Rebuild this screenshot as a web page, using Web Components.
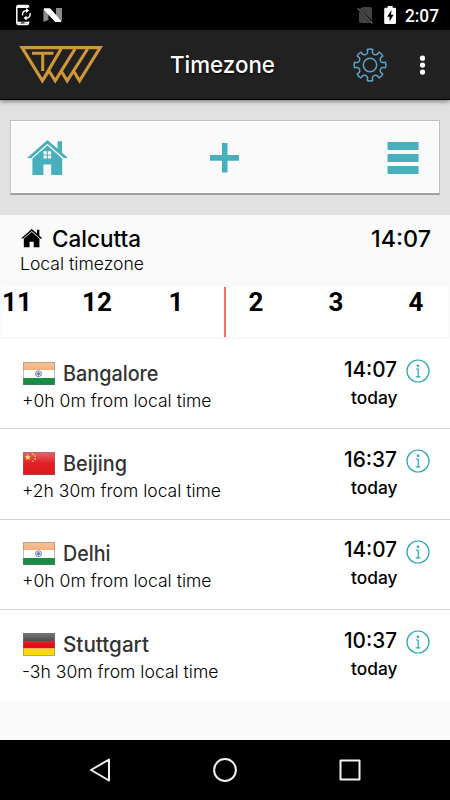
<!DOCTYPE html>
<html lang="en">
<head>
<meta charset="utf-8">
<title>Timezone</title>
<style>
html,body{margin:0;padding:0;background:#fafafa}
body{width:450px;height:800px;overflow:hidden;font-family:Inter,"Liberation Sans",sans-serif;color:#000}
</style>
</head>
<body>
<timezone-app></timezone-app>
<script>
const define=(name,html,setup)=>{
  customElements.define(name,class extends HTMLElement{
    connectedCallback(){
      if(this.shadowRoot)return;
      const r=this.attachShadow({mode:'open'});
      const t=document.createElement('template');
      t.innerHTML=typeof html==='function'?html(this):html;
      r.appendChild(t.content.cloneNode(true));
      if(setup)setup(this,r);
    }
  });
};
const attr=(e,n,d)=>e.getAttribute(n)||d;

/* One line of text set to an exact measure; height 1.4 x size, baseline 1.1 x size. */
define('fit-text',e=>{
  const s=+attr(e,'size',18),w=+attr(e,'width',100),h=+attr(e,'height',s*1.4),b=+attr(e,'base',s*1.1);
  return `<style>:host{display:block;flex:none;width:${w}px;height:${h}px}svg{display:block;overflow:visible}
  text{font-family:${attr(e,'font','Inter')},"Liberation Sans",sans-serif;font-size:${s}px;font-weight:${attr(e,'weight','400')};fill:currentColor}</style>
  <svg width="${w}" height="${h}"><text x="0" y="${b}" textLength="${w}" lengthAdjust="spacingAndGlyphs">${e.textContent}</text></svg>`;
});

define('status-bar',`<style>:host{display:flex;height:30px;background:#000;color:#fff;align-items:flex-start}
svg{display:block;flex:none}.gap{flex:1}fit-text{margin-right:11px}</style>
<svg width="80" height="30" viewBox="0 0 80 30">
 <path d="M28.600 7.500V6.600Q28.600 5.600 27.600 5.600H18.400Q16.800 5.600 16.800 7.200V22.800Q16.800 24.400 18.400 24.400H27Q28.600 24.400 28.600 22.800V21.500" fill="none" stroke="#fff" stroke-width="1.500"/>
 <path d="M17 5h11v3H17zM17 21.800h11.600v2H17z" fill="#fff"/><path d="M21 22.400h3.500v1H21z" fill="#000"/>
 <path d="M22.600 15.500A4 4 0 0 1 27 10.500M30 13A4 4 0 0 1 26 18.200" fill="none" stroke="#fff" stroke-width="1.400"/>
 <path d="M26 8l3.200 2.600L26 13zM26.600 15.600v5l-3-2.500z" fill="#fff"/>
 <path d="M43.400 9.200l5 2V20l-5 2zM56 8h6v12.500l-6-5z" fill="#8b8b8b"/>
 <path d="M44 8.200h6L61.200 20.500v1.500H55.200L44 10z" fill="#fff"/>
</svg><span class="gap"></span>
<svg width="50" height="30" viewBox="355 0 50 30">
 <path d="M363 7h7.500q1.500 0 1.500 1.500V20.500L359.500 8.800zM359 11l12 12H360.500Q359 23 359 21.500z" fill="#424242"/>
 <path d="M357.500 8l15 15.500" stroke="#5a5a5a" stroke-width="1.400"/>
 <path d="M387.600 6h5v1.700h2.200q1.200 0 1.200 1.200V22.800q0 1.200-1.200 1.200h-9.400q-1.200 0-1.200-1.200V8.900q0-1.200 1.200-1.200h2.200z" fill="#fff"/>
 <path d="M391.700 10l-4.700 6.800h2.600V21.500l4-6.800h-2.600z" fill="#000"/>
</svg>
<fit-text font="Roboto" size="18" weight="500" width="34" height="30" base="21.800">2:07</fit-text>`);

define('brand-logo',`<style>:host{display:block;width:86px;height:42px}svg{display:block}</style>
<svg width="86" height="42" viewBox="18 44 86 42" fill="none" stroke="#d0973a" stroke-width="3.100">
 <path d="M48.700 71l-6.300 9.900L22 47.600H100.200L79.600 80.900 73.300 70.500M61 49L42.400 80.900M48.700 70.500L55.200 80.900 75 49M60.800 70.500L67.200 80.900 87.500 49M73.300 70.500L79.600 80.900"/>
 <path d="M32 53.200H53.500M42.700 53.200V71" stroke-width="3"/>
</svg>`);

define('gear-icon',`<style>:host{display:block}svg{display:block}</style>
<svg width="36" height="36" viewBox="-18 -18 36 36" fill="none" stroke="#5ca3c9" stroke-width="1.500" stroke-linejoin="round"><circle r="6.700"/><path/></svg>`,(e,r)=>{
  let d='';
  for(let i=0;i<8;i++){
    const p=(rad,deg)=>{const a=(i*45+deg-90)*Math.PI/180;return (rad*Math.cos(a)).toFixed(2)+' '+(rad*Math.sin(a)).toFixed(2)};
    d+=(i?'L':'M')+p(11.800,-15)+'L'+p(13,-10.500)+'L'+p(15.700,-10)+'Q'+p(16.500,0)+' '+p(15.700,10)+'L'+p(13,10.500)+'L'+p(11.800,15)+'Q'+p(10.800,22.500)+' '+p(11.800,30);
  }
  r.querySelector('path').setAttribute('d',d+'Z');
});

define('app-header',`<style>:host{display:flex;box-sizing:border-box;height:70px;background:#212121;border-bottom:1px solid #000;color:#fff;padding:14px 20px 0 18px;box-shadow:0 1px 5px #0008;position:relative}
brand-logo{margin-right:66px}fit-text{text-shadow:0 1px 2px #000}gear-icon{margin:3px 0 0 77px}.dots{display:block;margin:9px 0 0 27px}</style>
<brand-logo></brand-logo>
<fit-text size="23.500" weight="500" width="105" height="42" base="29.300">Timezone</fit-text>
<gear-icon></gear-icon>
<svg class="dots" width="16" height="26" viewBox="414.500 53 16 26" fill="#fff"><circle cx="422.500" cy="57.600" r="2.800"/><circle cx="422.500" cy="65" r="2.800"/><circle cx="422.500" cy="72.400" r="2.800"/></svg>`);

define('house-icon',e=>{const s=+attr(e,'size',42);return `<style>:host{display:block}svg{display:block}</style>
<svg width="${s}" height="${s*36/42}" viewBox="0 0 42 36" fill="currentColor">
 <path d="M20.500 0L0 18h4.200L20.500 3.800 36.800 18H41L35 12.600V1.200H30.600V8.800z"/>
 <path d="M20.500 5.500L5.400 18.500V35H16.400V24.500H24.200V35H35.200V18.500z"/>
 ${e.hasAttribute('window')?'<path fill="#fafafa" d="M16.500 11.200h3.300v3.200h-3.300zM20.900 11.200h3.300v3.200h-3.300zM16.500 15.400h3.300v3h-3.300zM20.900 15.400h3.300v3h-3.300z"/>':''}
</svg>`});

define('tool-bar',`<style>:host{display:block;box-sizing:border-box;height:115px;background:#e1e1e1;padding:20px 10px}
.card{box-sizing:border-box;height:75px;background:#fafafa;border:1px solid #c1c1c1;border-bottom:2px solid #a0a0a0;box-shadow:inset 0 0 0 1px #fff;display:grid;grid-template-columns:1fr auto 1fr;align-items:start;padding:19px 20px 0 16px;color:#48b0bc}
svg{display:block}.plus{margin:3px 0 0 2px}.menu{margin-top:2px;justify-self:end}</style>
<div class="card"><house-icon window></house-icon>
<svg class="plus" width="29" height="30"><path d="M12 0h5.500v12H29v5.800H17.500V29.500H12V17.800H0V12h12z" fill="currentColor"/></svg>
<svg class="menu" width="32" height="32" fill="currentColor"><path d="M.5 0h31v8h-31zM.5 12h31v8h-31zM.5 24h31v8h-31z"/></svg></div>`);

define('local-zone',`<style>:host{display:flex;justify-content:space-between;box-sizing:border-box;height:72px;background:#fafafa;padding:10px 19px 0 20px}
.line{display:flex;height:28px}house-icon{margin:4px 9px 0 1px}</style>
<div><div class="line"><house-icon size="22"></house-icon><fit-text size="23" weight="500" width="89" height="28" base="22.400">Calcutta</fit-text></div>
<fit-text size="17.500" weight="300" width="124" height="24" base="17">Local timezone</fit-text></div>
<fit-text size="23" weight="500" width="60" height="28" base="22.400">14:07</fit-text>`);

define('hour-strip',`<style>:host{display:flex;box-sizing:border-box;height:50px;margin:0 2px 2px;background:#fff;position:relative;font:bold 26px/31px Roboto,sans-serif}
span{width:80px;box-sizing:border-box;flex:none}.one{padding-left:6.500px}i{position:absolute;left:222px;top:0;width:2px;height:50px;background:#ff6a6a}
.clip{display:flex;overflow:hidden;width:446px}</style>
<div class="clip"><span>11</span><span>12</span><span class="one">1</span><span class="one">2</span><span class="one">3</span><span class="one">4</span></div><i></i>`);

const flags={
 in:`<path fill="#f4a468" d="M0 0h32v8H0z"/><path fill="#fff" d="M0 8h32v8H0z"/><path fill="#168b42" d="M0 16h32v7H0z"/><g fill="none" stroke="#4b67a6"><circle cx="15.500" cy="11.700" r="3" stroke-width=".8"/><path stroke-width=".5" d="M12.500 11.700h6M15.500 8.700v6M13.400 9.600l4.200 4.200M17.600 9.600l-4.200 4.200"/></g><circle cx="15.500" cy="11.700" r="1.200" fill="#4b67a6"/>`,
 cn:`<path fill="#df171c" d="M0 0h32v23H0z"/><path fill="#ffdf3d" d="M4.700 2.100l.9 2.100 2.400.1-1.900 1.500.7 2.300-2.100-1.300-2 1.300.7-2.300L1.500 4.300l2.400-.1zM9.200 1.500h1.500v1.200H9.200zM11.500 3.600H13v1.200h-1.500zM11.500 6.300H13v1.200h-1.500zM9.200 8.500h1.500v1.200H9.200z"/>`,
 de:`<path fill="#333" d="M0 0h32v8H0z"/><path fill="#dc0714" d="M0 8h32v7.500H0z"/><path fill="#f9d80e" d="M0 15.500h32V23H0z"/>`};
define('flag-icon',e=>`<style>:host{display:block;flex:none;width:32px;height:23px}svg{display:block}</style>
<svg width="32" height="23" viewBox="0 0 32 23"><defs><linearGradient id="g" x2="0" y2="1"><stop stop-color="#fff" stop-opacity=".34"/><stop offset=".5" stop-color="#fff" stop-opacity=".04"/><stop offset="1" stop-color="#fff" stop-opacity="0"/></linearGradient></defs>${flags[attr(e,'code','in')]}<path fill="url(#g)" d="M0 0h32v23H0z"/><path fill="none" stroke="#777" stroke-opacity=".45" d="M.5.5h31v22H.5z"/></svg>`);

define('info-icon',`<style>:host{display:block}svg{display:block}</style>
<svg width="24" height="24" viewBox="0 0 24 24"><circle cx="12" cy="12" r="11" fill="none" stroke="#23a7b7" stroke-width="1.200"/><circle cx="12" cy="6.700" r="1.300" fill="#23a7b7"/><path d="M9.900 10h2.300v7.500M9.700 17.800h4.700" fill="none" stroke="#23a7b7" stroke-width="1.200"/></svg>`);

define('zone-row',e=>`<style>:host{display:flex;box-sizing:border-box;height:90.400px;background:#fff;border-bottom:1px solid #d2d2d2;padding:22.600px 20px 0 22.700px}
:host([last]){border:0}
.name{display:flex;height:29px;color:#333}flag-icon{margin:0 8px 0 0}.grow{flex:1}.when{display:flex;flex-direction:column;align-items:flex-end;margin-right:9px}info-icon{margin-top:-2.500px}.from{margin-left:-.8px}</style>
<div><div class="name"><flag-icon code="${attr(e,'flag','in')}"></flag-icon><fit-text size="21" weight="450" width="${attr(e,'name-width','95')}" height="29" base="19">${attr(e,'name','')}</fit-text></div>
<fit-text class="from" size="17.500" weight="300" width="${attr(e,'offset-width','190')}" height="26" base="15.700">${attr(e,'offset','')}</fit-text></div>
<span class="grow"></span>
<div class="when"><fit-text size="20.800" weight="500" width="53" height="26" base="14.900">${attr(e,'time','')}</fit-text><fit-text size="17.500" weight="500" width="46.500" height="24" base="15.800">today</fit-text></div>
<info-icon></info-icon>`);

define('nav-bar',`<style>:host{display:flex;height:60px;background:#000}svg{display:block}</style>
<svg width="450" height="60" fill="none" stroke="#f1f1f1" stroke-width="2" stroke-linejoin="round"><path d="M109 19.500V40.500L91 30z"/><circle cx="225" cy="30" r="10.900"/><path d="M340.500 20.500h19v19h-19z"/></svg>`);

define('timezone-app',`<style>:host{display:flex;flex-direction:column;width:450px;height:800px;background:#fafafa}.grow{flex:1}:host>*{flex-shrink:0}</style>
<status-bar></status-bar><app-header></app-header><tool-bar></tool-bar><local-zone></local-zone><hour-strip></hour-strip>
<zone-row flag="in" name="Bangalore" name-width="95.500" offset="+0h 0m from local time" offset-width="189.500" time="14:07"></zone-row>
<zone-row flag="cn" name="Beijing" name-width="64" offset="+2h 30m from local time" offset-width="199" time="16:37"></zone-row>
<zone-row flag="in" name="Delhi" name-width="47.500" offset="+0h 0m from local time" offset-width="189.500" time="14:07"></zone-row>
<zone-row last flag="de" name="Stuttgart" name-width="86" offset="-3h 30m from local time" offset-width="196.500" time="10:37"></zone-row>
<div class="grow"></div><nav-bar></nav-bar>`);
</script>
</body>
</html>
